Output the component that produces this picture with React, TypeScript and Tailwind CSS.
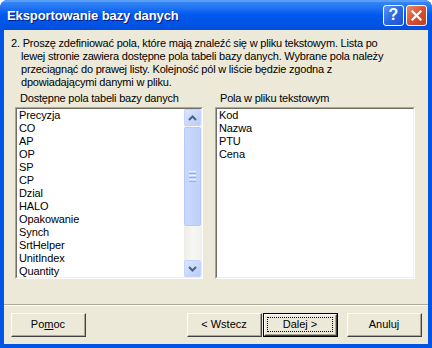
import React from "react";

const FONT = { fontFamily: '"Liberation Sans", Arial, sans-serif' };

function ClassicButton({ children, def = false }: { children: React.ReactNode; def?: boolean }) {
  if (def) {
    return (
      <div className="w-[75px] h-[24px] border border-black bg-[#ECE9D8]">
        <div className="w-full h-full border-t border-l border-t-white border-l-white border-b border-r border-b-[#404040] border-r-[#404040]">
          <div className="w-full h-full border-b border-r border-b-[#ACA899] border-r-[#ACA899] p-[2px]">
            <div className="w-full h-full border border-dotted border-black flex items-center justify-center text-[11px] text-black">
              {children}
            </div>
          </div>
        </div>
      </div>
    );
  }
  return (
    <div className="w-[75px] h-[24px] bg-[#ECE9D8] border-t border-l border-t-white border-l-white border-b border-r border-b-[#404040] border-r-[#404040]">
      <div className="w-full h-full border-b border-r border-b-[#ACA899] border-r-[#ACA899] flex items-center justify-center text-[11px] text-black">
        {children}
      </div>
    </div>
  );
}

function ListBox({ items, scroll, width }: { items: string[]; scroll?: boolean; width: string }) {
  return (
    <div className={`${width} h-[172px] border-t border-l border-t-[#ACA899] border-l-[#ACA899] border-b border-r border-b-white border-r-white`}>
      <div className="w-full h-full border-t border-l border-t-[#716F64] border-l-[#716F64] border-b border-r border-b-[#F1EFE2] border-r-[#F1EFE2] bg-white flex">
        <div className="flex-1 pl-[2px] overflow-hidden">
          {items.map((it) => (
            <div key={it} className="h-[13px] leading-[13px] text-[11px] text-black whitespace-nowrap tracking-[-0.1px]">
              {it}
            </div>
          ))}
        </div>
        {scroll && (
          <div className="w-[17px] h-full bg-gradient-to-r from-[#EEEDE5] via-[#F7F7F3] to-[#F3F1EC] flex flex-col">
            <div className="w-[17px] h-[17px] rounded-[2px] border border-[#C3D3FD] bg-gradient-to-br from-[#DCE6FD] to-[#B9CBF7] flex items-center justify-center">
              <svg width="9" height="6" viewBox="0 0 9 6">
                <path d="M1 5 L4.5 1.5 L8 5" stroke="#4D6185" strokeWidth="2" fill="none" />
              </svg>
            </div>
            <div className="mt-[1px] w-[17px] h-[99px] rounded-[2px] border border-[#B7C9F4] bg-gradient-to-r from-[#C9D8FC] to-[#BFD0FA] flex flex-col items-center justify-center gap-[1px]">
              <div className="w-[7px] h-[1px] bg-[#EEF4FE]" />
              <div className="w-[7px] h-[1px] bg-[#8CB0F8]" />
              <div className="w-[7px] h-[1px] bg-[#EEF4FE]" />
              <div className="w-[7px] h-[1px] bg-[#8CB0F8]" />
              <div className="w-[7px] h-[1px] bg-[#EEF4FE]" />
              <div className="w-[7px] h-[1px] bg-[#8CB0F8]" />
            </div>
            <div className="flex-1" />
            <div className="w-[17px] h-[17px] rounded-[2px] border border-[#C3D3FD] bg-gradient-to-br from-[#DCE6FD] to-[#B9CBF7] flex items-center justify-center">
              <svg width="9" height="6" viewBox="0 0 9 6">
                <path d="M1 1 L4.5 4.5 L8 1" stroke="#4D6185" strokeWidth="2" fill="none" />
              </svg>
            </div>
          </div>
        )}
      </div>
    </div>
  );
}

export default function App() {
  const left = ["Precyzja", "CO", "AP", "OP", "SP", "CP", "Dzial", "HALO", "Opakowanie", "Synch", "SrtHelper", "UnitIndex", "Quantity"];
  const right = ["Kod", "Nazwa", "PTU", "Cena"];
  return (
    <div className="w-[432px] h-[348px] flex flex-col rounded-t-[8px] overflow-hidden bg-[#0055E5]" style={FONT}>
      {/* Title bar */}
      <div className="h-[30px] flex items-center px-[7px] bg-gradient-to-b from-[#3D8DF5] via-[#0058EE] to-[#0050DE] relative">
        <div className="absolute top-0 left-0 right-0 h-[2px] bg-[#5A9EF8]" />
        <div
          className="flex-1 text-white font-bold text-[13px] pt-[1px] tracking-[-0.1px]"
          style={{ textShadow: "1px 1px #0A1883" }}
        >
          Eksportowanie bazy danych
        </div>
        <div className="flex gap-[2px] mr-[-2px]">
          <div className="w-[21px] h-[21px] rounded-[3px] border border-white bg-gradient-to-br from-[#5C95F4] via-[#2B66E3] to-[#1D53D8] flex items-center justify-center text-white font-bold text-[16px] leading-none">
            ?
          </div>
          <div className="w-[21px] h-[21px] rounded-[3px] border border-white bg-gradient-to-br from-[#E88A6C] via-[#D9512E] to-[#C33F1C] flex items-center justify-center">
            <svg width="11" height="11" viewBox="0 0 11 11">
              <path d="M1.5 1.5 L9.5 9.5 M9.5 1.5 L1.5 9.5" stroke="white" strokeWidth="2.2" strokeLinecap="square" />
            </svg>
          </div>
        </div>
      </div>
      {/* Body */}
      <div className="flex-1 mx-[4px] mb-[4px] bg-[#ECE9D8] flex flex-col">
        <div className="h-[274px] pl-[7px] pt-[7px]">
          <div className="text-[11px] leading-[13px] text-black w-[410px] tracking-[-0.2px]">
            <div>2. Proszę zdefiniować pola, które mają znaleźć się w pliku tekstowym. Lista po</div>
            <div className="pl-[10px]">lewej stronie zawiera dostępne pola tabeli bazy danych. Wybrane pola należy</div>
            <div className="pl-[10px]">przeciągnąć do prawej listy. Kolejność pól w liście będzie zgodna z</div>
            <div className="pl-[10px]">dpowiadającymi danymi w pliku.</div>
          </div>
          <div className="flex mt-[3px] pl-[4px] gap-[12px]">
            <div className="flex flex-col">
              <div className="text-[11px] leading-[13px] pl-[5px] mb-[2px] text-black tracking-[-0.2px]">Dostępne pola tabeli bazy danych</div>
              <ListBox items={left} scroll width="w-[188px]" />
            </div>
            <div className="flex flex-col">
              <div className="text-[11px] leading-[13px] pl-[5px] mb-[2px] text-black tracking-[-0.2px]">Pola w pliku tekstowym</div>
              <ListBox items={right} width="w-[200px]" />
            </div>
          </div>
        </div>
        <div className="h-[1px] bg-[#ACA899]" />
        <div className="h-[1px] bg-white" />
        <div className="flex pl-[7px] pr-[6px] pt-[7px]">
          <ClassicButton>
            <span>
              Po<span className="underline">m</span>oc
            </span>
          </ClassicButton>
          <div className="flex-1" />
          <ClassicButton>&lt; Wstecz</ClassicButton>
          <div className="w-[1px]" />
          <ClassicButton def>Dalej &gt;</ClassicButton>
          <div className="w-[9px]" />
          <ClassicButton>Anuluj</ClassicButton>
        </div>
      </div>
    </div>
  );
}
